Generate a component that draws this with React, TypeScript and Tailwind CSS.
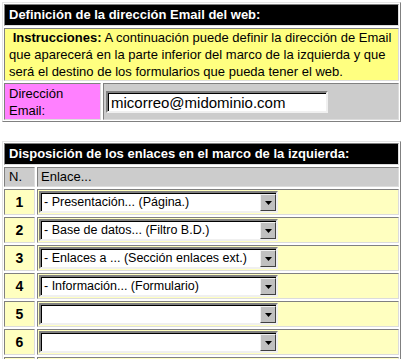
import React from "react";

const cell = "border border-t-[#808080] border-l-[#808080] border-b-[#dcdcdc] border-r-[#dcdcdc]";

function Select({ text }: { text: string }) {
  return (
    <div className="ml-[1px] w-[239px] h-[22px] flex bg-white border-2 border-t-[#808080] border-l-[#808080] border-b-[#f0f0f0] border-r-[#f0f0f0]">
      <div className="flex-1 flex border-t border-l border-t-black border-l-black bg-white">
        <div className="flex-1 text-[12.5px] leading-[17px] pl-[2px] text-black whitespace-nowrap overflow-hidden">{text}</div>
        <div className="w-[16px] h-full bg-[#c0c0c0] border border-t-[#f0f0f0] border-l-[#f0f0f0] border-b-[#404040] border-r-[#404040] flex items-center justify-center">
          <svg width="7" height="4" viewBox="0 0 7 4"><path d="M0 0h7L3.5 4z" fill="#000" /></svg>
        </div>
      </div>
    </div>
  );
}

const rows = [
  "- Presentación... (Página.)",
  "- Base de datos... (Filtro B.D.)",
  "- Enlaces a ... (Sección enlaces ext.)",
  "- Información... (Formulario)",
  "",
  "",
  "",
];

export default function App() {
  return (
    <div className="w-[408px] h-[359px] overflow-hidden bg-white pl-[2px] pt-[2px] text-black" style={{ fontFamily: '"Liberation Sans", Arial, sans-serif' }}>
      <div className="w-[399px] border border-t-[#e4e4e4] border-l-[#e4e4e4] border-b-[#808080] border-r-[#808080] p-[1px] flex flex-col gap-[2px]">
        <div className={`${cell} h-[22px] bg-black text-white font-bold text-[13px] leading-[19px] pl-[4px]`}>
          Definición de la dirección Email del web:
        </div>
        <div className={`${cell} bg-[#ffff80] text-[13px] leading-[17px] pl-[4px]`}>
          &nbsp;<b>Instrucciones:</b> A continuación puede definir la dirección de Email<br />
          que aparecerá en la parte inferior del marco de la izquierda y que<br />
          será el destino de los formularios que pueda tener el web.
        </div>
        <div className="flex gap-[2px]">
          <div className={`${cell} w-[97px] h-[37px] bg-[#ff80ff] text-[13px] leading-[17px] pl-[4px] pt-[1px]`}>
            Dirección<br />Email:
          </div>
          <div className={`${cell} flex-1 bg-[#cccccc] flex items-center pl-[2px]`}>
            <div className="w-[222px] h-[22px] bg-white border-2 border-t-[#808080] border-l-[#808080] border-b-[#f0f0f0] border-r-[#f0f0f0]">
              <div className="w-full h-full border-t border-l border-t-black border-l-black text-[15px] leading-[18px] pl-[2px]">
                micorreo@midominio.com
              </div>
            </div>
          </div>
        </div>
      </div>

      <div className="h-[19px]" />

      <div className="w-[399px] border border-t-[#e4e4e4] border-l-[#e4e4e4] border-b-[#808080] border-r-[#808080] p-[1px] flex flex-col gap-[2px]">
        <div className={`${cell} h-[22px] bg-black text-white font-bold text-[13px] leading-[19px] pl-[4px]`}>
          Disposición de los enlaces en el marco de la izquierda:
        </div>
        <div className="flex gap-[2px]">
          <div className={`${cell} w-[31px] h-[20px] bg-[#cccccc] text-[13px] leading-[18px] pl-[4px]`}>N.</div>
          <div className={`${cell} flex-1 bg-[#cccccc] text-[13px] leading-[18px] pl-[3px]`}>Enlace...</div>
        </div>
        {rows.map((t, i) => (
          <div key={i} className="flex gap-[2px]">
            <div className={`${cell} w-[31px] h-[26px] bg-[#ffffc0] font-bold text-[14px] flex items-center justify-center`}>{i + 1}</div>
            <div className={`${cell} flex-1 bg-[#ffffc0] flex items-center`}>
              <Select text={t} />
            </div>
          </div>
        ))}
      </div>
    </div>
  );
}
